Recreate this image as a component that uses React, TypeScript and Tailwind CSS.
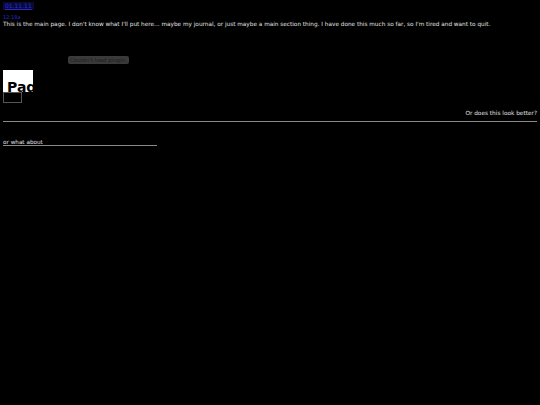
export default function App() {
  return (
    <div className="min-h-[405px] bg-black px-[3px] pt-[1px] font-['DejaVu_Sans',sans-serif] text-[6px] text-[#d8d8d8]">
      <div className="inline-block bg-[#0a0a3a] px-[2px] py-[1px] leading-[6px]">
        <a className="text-[6px] text-[#2a2ad0] underline">01.11.11</a>
      </div>
      <div className="mt-[4px] text-[5px] leading-[6px] text-[#2a2ad0]">12:18a</div>
      <p className="mt-[1px] text-[5.75px] leading-[7px] text-[#e0e0e0]">
        This is the main page. I don't know what I'll put here... maybe my journal, or just maybe a main section thing. I have done this much so far, so I'm tired and want to quit.
      </p>
      <div className="mt-[27px] pl-[65px]">
        <span className="inline-block rounded-[2px] bg-[#3a3a3a] px-[2px] text-[5.5px] leading-[8px] text-[#1e1e1e]">
          Couldn't load plugin.
        </span>
      </div>
      <div className="mt-[6px] h-[22px] w-[30px] overflow-hidden bg-white pl-[4px]">
        <div className="pt-[10px] font-['DejaVu_Sans',sans-serif] text-[14px] leading-[14px] font-bold text-black">Page</div>
      </div>
      <div className="h-[11px] w-[19px] border border-[#555] bg-black" />
      <div className="mt-[6px] text-right text-[5.8px] leading-[8px] text-[#e0e0e0]">Or does this look better?</div>
      <hr className="mt-[4px] border-t border-[#888]" />
      <div className="mt-[17px] w-[154px] border-b border-[#888] text-[5.7px] leading-[6px] text-[#e0e0e0]">
        or what about
      </div>
    </div>
  )
}
